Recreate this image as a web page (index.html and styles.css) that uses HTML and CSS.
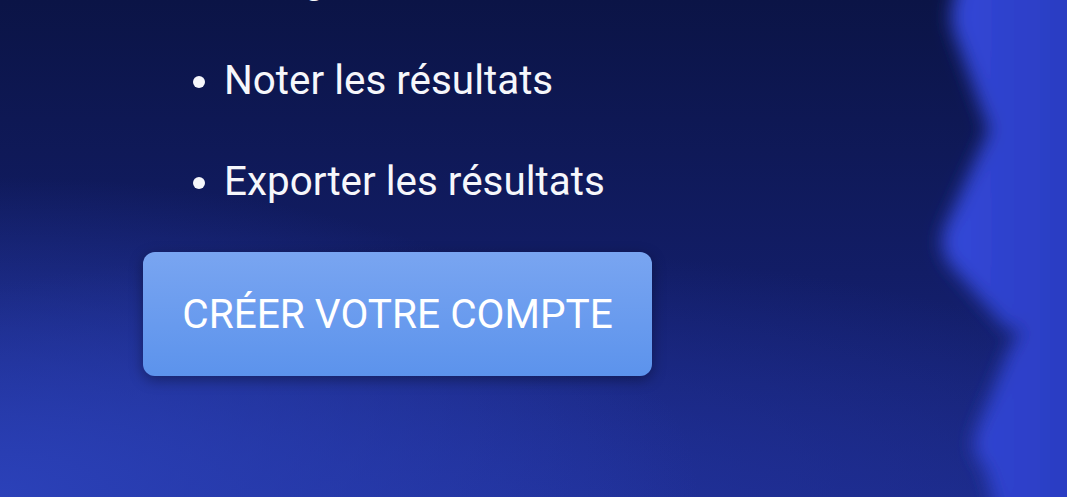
FILE: index.html
```html
<!DOCTYPE html>
<html lang="fr">
<head>
    <meta charset="UTF-8">
    <meta name="viewport" content="width=device-width, initial-scale=1.0">
    <title>Créer votre compte</title>
    <link rel="stylesheet" href="styles.css">
</head>
<body>
    <main class="hero">
        <!-- Liste des fonctionnalités -->
        <ul class="features">
            <li>Rédiger les examens</li>
            <li>Noter les résultats</li>
            <li>Exporter les résultats</li>
        </ul>

        <a class="cta" href="#">CRÉER VOTRE COMPTE</a>

        <!-- Formes floues décoratives à droite -->
        <svg class="deco" width="160" height="497" viewBox="0 0 160 497" aria-hidden="true">
            <defs>
                <filter id="flou" filterUnits="userSpaceOnUse" x="-40" y="-60" width="260" height="620">
                    <feGaussianBlur stdDeviation="9" />
                </filter>
                <linearGradient id="bleu" gradientUnits="userSpaceOnUse" x1="30" y1="0" x2="160" y2="0">
                    <stop offset="0" stop-color="#3649dc" />
                    <stop offset="0.45" stop-color="#2f43cf" />
                    <stop offset="1" stop-color="#2b3dc2" />
                </linearGradient>
            </defs>
            <g filter="url(#flou)" fill="url(#bleu)">
                <path d="M58 -30 Q40 5 46 30 L82 130 L38 228 Q30 250 46 268 L100 330 L190 330 L190 -30 Z" />
                <path d="M160 270 L104 345 L70 430 Q62 452 78 468 L94 530 L190 530 L190 270 Z" />
            </g>
        </svg>
    </main>
</body>
</html>
```

FILE: styles.css
```css
/* Fond de la section d'accueil */
body {
    margin: 0;
    height: 497px;
    overflow: hidden;
    font-family: Roboto, "Liberation Sans", sans-serif;
    color: #f6f7fb;
}

.hero {
    position: relative;
    height: 497px;
    padding-left: 143px;
    overflow: hidden;
    background:
        radial-gradient(ellipse 700px 320px at 0% 100%, #2b41b9 0%, rgba(43, 65, 185, 0) 100%),
        radial-gradient(ellipse 900px 300px at 40% 110%, #22339f 0%, rgba(34, 51, 159, 0) 100%),
        linear-gradient(180deg, #0b1446 0%, #121d66 55%, #1a2782 100%);
}

/* Liste des fonctionnalités */
.features {
    margin: -50px 0 0;
    padding-left: 81px;
    font-size: 40.4px;
    line-height: 60px;
}

.features li {
    margin-bottom: 41px;
}

.features li:last-child {
    margin-bottom: 40px;
}

/* Bouton principal */
.cta {
    display: inline-flex;
    align-items: center;
    justify-content: center;
    width: 509px;
    height: 124px;
    box-sizing: border-box;
    border-radius: 12px;
    background: linear-gradient(180deg, #79a5f1 0%, #5c93ec 100%);
    box-shadow: 0 4px 14px rgba(0, 0, 0, 0.35);
    color: #ffffff;
    font-size: 40.6px;
    text-decoration: none;
}

.deco {
    position: absolute;
    top: 0;
    right: 0;
    overflow: visible;
}
```
